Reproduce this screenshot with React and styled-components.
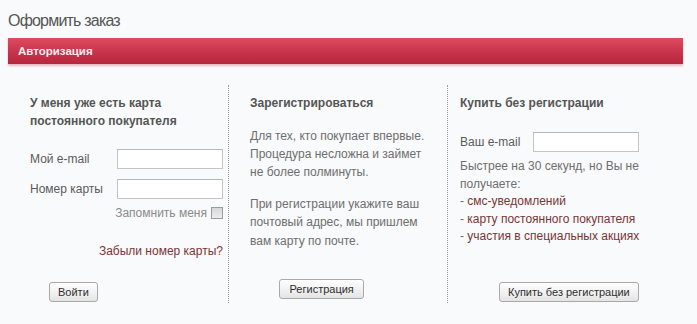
import styled, { createGlobalStyle } from 'styled-components';

const FONT = '"Liberation Sans", Arial, sans-serif';

const GlobalStyle = createGlobalStyle`
  html, body {
    margin: 0;
    padding: 0;
    background: #f9fafb;
    font-family: ${FONT};
  }
`;

const Page = styled.div`
  width: 697px;
  height: 324px;
  padding: 0 14px 0 8px;
  box-sizing: border-box;
`;

const Title = styled.h1`
  margin: 0;
  height: 38px;
  padding-top: 10.5px;
  box-sizing: border-box;
  font-size: 16px;
  line-height: 20px;
  letter-spacing: -0.8px;
  font-weight: normal;
  color: #555;
`;

const Bar = styled.div`
  height: 26px;
  padding-left: 10px;
  display: flex;
  align-items: center;
  background: linear-gradient(#de4c5f, #c5314a 60%, #b6283d);
  box-shadow: 0 2px 2px rgba(190, 70, 90, 0.35);
  color: #fbeaed;
  font-size: 11.5px;
  font-weight: bold;
`;

const Columns = styled.div`
  display: grid;
  grid-template-columns: 221px 219px 1fr;
  margin-top: 21px;
  height: 218px;
`;

const Column = styled.div`
  display: flex;
  flex-direction: column;
  padding: 8.5px 6px 0 ${(p) => p.$indent}px;
  border-left: ${(p) => (p.$divider ? '1px dotted #9a9a9a' : 'none')};
  margin-left: ${(p) => (p.$divider ? '-1px' : '0')};
  font-size: 12px;
  line-height: 18px;
  color: #6e6e6e;
`;

const Heading = styled.h2`
  margin: 0;
  font-size: 12px;
  line-height: 18px;
  font-weight: bold;
  color: #555;
`;

const FieldRow = styled.label`
  display: flex;
  align-items: center;
  height: 20px;
  margin-top: ${(p) => p.$gap}px;
  color: #5a5a5a;
`;

const FieldLabel = styled.span`
  width: ${(p) => p.$width}px;
  flex: none;
`;

const TextInput = styled.input`
  width: 106px;
  height: 20px;
  box-sizing: border-box;
  border: 1px solid #c4c4c4;
  border-top-color: #b8b8b8;
  background: #fff;
  margin: 0;
  padding: 0 3px;
  font: inherit;
`;

const RememberRow = styled.label`
  display: flex;
  align-items: center;
  justify-content: flex-end;
  gap: 4px;
  height: 16px;
  margin-top: 6px;
  color: #8a8a8a;
`;

const Check = styled.input`
  appearance: none;
  width: 12px;
  height: 12px;
  margin: 0;
  border: 1px solid #9c9c9c;
  background: linear-gradient(#d6d6d6, #eeeeee);
`;

const Forgot = styled.a`
  align-self: flex-end;
  margin-top: 20.5px;
  color: #7c3434;
  text-decoration: none;
`;

const Paragraph = styled.p`
  margin: ${(p) => p.$gap}px 0 0;
  line-height: ${(p) => p.$lh || 18}px;
  white-space: nowrap;
`;

const LinkItem = styled.span`
  color: #6e6e6e;
  & > em {
    font-style: normal;
    color: #7c3434;
  }
`;

const Spacer = styled.div`
  flex: 1;
`;

const Button = styled.button`
  align-self: flex-start;
  margin: 0 0 ${(p) => p.$bottom}px ${(p) => p.$offset}px;
  height: 20px;
  padding: 0 ${(p) => p.$pad || 8}px;
  border: 1px solid #a9a9a9;
  border-radius: 3px;
  background: linear-gradient(#fefefe, #f2f2f2 50%, #e4e4e4);
  box-shadow: inset 0 1px 0 #fff;
  font-family: ${FONT};
  font-size: 11px;
  line-height: 18px;
  color: #2e2e2e;
`;

export default function App() {
  return (
    <>
      <GlobalStyle />
      <Page>
        <Title>Оформить заказ</Title>
        <Bar>Авторизация</Bar>
        <Columns>
          <Column $indent={22}>
            <Heading>
              У меня уже есть карта
              <br />
              постоянного покупателя
            </Heading>
            <FieldRow $gap={19.5}>
              <FieldLabel $width={87}>Мой e-mail</FieldLabel>
              <TextInput type="text" />
            </FieldRow>
            <FieldRow $gap={10}>
              <FieldLabel $width={87}>Номер карты</FieldLabel>
              <TextInput type="text" />
            </FieldRow>
            <RememberRow>
              Запомнить меня <Check type="checkbox" />
            </RememberRow>
            <Forgot href="#">Забыли номер карты?</Forgot>
            <Spacer />
            <Button $offset={19} $bottom={1}>Войти</Button>
          </Column>

          <Column $indent={21} $divider>
            <Heading>Зарегистрироваться</Heading>
            <Paragraph $gap={15}>
              Для тех, кто покупает впервые.
              <br />
              Процедура несложна и займет
              <br />
              не более полминуты.
            </Paragraph>
            <Paragraph $gap={14} $lh={18.5}>
              При регистрации укажите ваш
              <br />
              почтовый адрес, мы пришлем
              <br />
              вам карту по почте.
            </Paragraph>
            <Spacer />
            <Button $offset={29} $bottom={4} $pad={9.5}>Регистрация</Button>
          </Column>

          <Column $indent={12} $divider>
            <Heading>Купить без регистрации</Heading>
            <FieldRow $gap={20}>
              <FieldLabel $width={73}>Ваш e-mail</FieldLabel>
              <TextInput type="text" />
            </FieldRow>
            <Paragraph $gap={6.5} $lh={17.5}>
              Быстрее на 30 секунд, но Вы не
              <br />
              получаете:
              <br />
              <LinkItem>
                - <em>смс-уведомлений</em>
              </LinkItem>
              <br />
              <LinkItem>
                - <em>карту постоянного покупателя</em>
              </LinkItem>
              <br />
              <LinkItem>
                - <em>участия в специальных акциях</em>
              </LinkItem>
            </Paragraph>
            <Spacer />
            <Button $offset={39} $bottom={1}>Купить без регистрации</Button>
          </Column>
        </Columns>
      </Page>
    </>
  );
}
